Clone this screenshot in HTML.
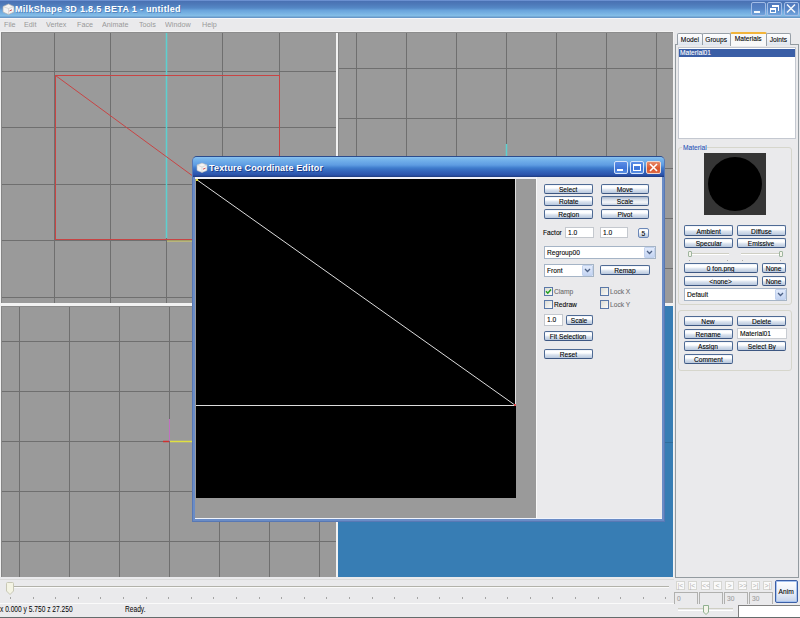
<!DOCTYPE html>
<html><head><meta charset="utf-8"><style>
*{margin:0;padding:0;box-sizing:border-box}
html,body{width:800px;height:618px;overflow:hidden}
body{position:relative;background:#eaeaec;font-family:"Liberation Sans",sans-serif;font-size:8px;color:#000}
.a{position:absolute;white-space:nowrap}
i{font-style:normal;display:inline-block;transform:scaleX(0.83);-webkit-text-stroke:0.1px currentColor}
i.l{transform-origin:0 50%}
.btn{position:absolute;border:1px solid #4e6a94;border-bottom-color:#3d5782;border-radius:2px;background:linear-gradient(#e4ebf5 0px,#ffffff 1px,#fcfdfe 38%,#d9e2ee 60%,#b9c8dd 100%);text-align:center;color:#000;white-space:nowrap;overflow:hidden}
.btn.p{background:linear-gradient(#a9b6ca 0px,#d6dde8 30%,#f4f6f9 65%,#c9d3e2 100%)}
.inp{position:absolute;background:#fff;border:1px solid #b6bcc6;padding-left:2px;white-space:nowrap;overflow:hidden}
</style></head><body>
<div class="a" style="left:0px;top:0px;width:800px;height:18px;background:linear-gradient(#7a9ede 0px,#4a72b4 1.5px,#4d78b8 4px,#5588c6 8px,#6aa4dc 10.5px,#80bae6 15px,#86c0e8 16px,#6898c8 17px,#6898c8 18px)"></div>
<div class="a" style="left:0px;top:18px;width:800px;height:1px;background:#f6f6fa"></div>
<svg class="a" style="left:2px;top:3px" width="13" height="12" viewBox="0 0 13 12">
 <path d="M1 3.5 L6.5 1 L12 3.5 L12 9 L6.5 11.5 L1 9 Z" fill="#f4f4f4" stroke="#b0b0b0" stroke-width="0.7"/>
 <path d="M1 3.5 L6.5 5.5 L12 3.5 M6.5 5.5 L6.5 11.5" fill="none" stroke="#c8c8c8" stroke-width="0.6"/>
 <path d="M7.5 8 L10 6.8" stroke="#d04040" stroke-width="0.9"/>
</svg>
<div class="a" style="left:15px;top:3px;font-size:9px;font-weight:bold;color:#fff;line-height:13px;white-space:nowrap;letter-spacing:0.3px;text-shadow:1px 1px 0 rgba(30,60,120,.35)">MilkShape 3D 1.8.5 BETA 1 - untitled</div>
<div class="a" style="left:751px;top:2px;width:15px;height:14px;border:1px solid #a2bce6;border-radius:2px;background:linear-gradient(#5078bc,#5684c6 50%,#70a4dc)"></div>
<div class="a" style="left:754px;top:11px;width:6px;height:2px;background:#f4f8fc"></div>
<div class="a" style="left:767px;top:2px;width:15px;height:14px;border:1px solid #a2bce6;border-radius:2px;background:linear-gradient(#5078bc,#5684c6 50%,#70a4dc)"></div>
<div class="a" style="left:770px;top:8px;width:6px;height:5px;border:1px solid #fff;border-top-width:2px"></div>
<div class="a" style="left:772px;top:5px;width:7px;height:6px;border-top:2px solid #fff;border-right:1px solid #fff"></div>
<div class="a" style="left:784px;top:2px;width:15px;height:14px;border:1px solid #a2bce6;border-radius:2px;background:linear-gradient(#5078bc,#5684c6 50%,#70a4dc)"></div>
<svg class="a" style="left:785px;top:3px" width="12" height="11"><path d="M2 1.5 L10 9.5 M10 1.5 L2 9.5" stroke="#f4f8fc" stroke-width="1.5"/></svg>
<div class="a" style="left:4px;top:18px;line-height:13px;font-size:8px;color:#999;white-space:nowrap;transform:scaleX(.9);transform-origin:0 0">File</div>
<div class="a" style="left:24px;top:18px;line-height:13px;font-size:8px;color:#999;white-space:nowrap;transform:scaleX(.9);transform-origin:0 0">Edit</div>
<div class="a" style="left:46px;top:18px;line-height:13px;font-size:8px;color:#999;white-space:nowrap;transform:scaleX(.9);transform-origin:0 0">Vertex</div>
<div class="a" style="left:77px;top:18px;line-height:13px;font-size:8px;color:#999;white-space:nowrap;transform:scaleX(.9);transform-origin:0 0">Face</div>
<div class="a" style="left:102px;top:18px;line-height:13px;font-size:8px;color:#999;white-space:nowrap;transform:scaleX(.9);transform-origin:0 0">Animate</div>
<div class="a" style="left:139px;top:18px;line-height:13px;font-size:8px;color:#999;white-space:nowrap;transform:scaleX(.9);transform-origin:0 0">Tools</div>
<div class="a" style="left:165px;top:18px;line-height:13px;font-size:8px;color:#999;white-space:nowrap;transform:scaleX(.9);transform-origin:0 0">Window</div>
<div class="a" style="left:202px;top:18px;line-height:13px;font-size:8px;color:#999;white-space:nowrap;transform:scaleX(.9);transform-origin:0 0">Help</div>
<div class="a" style="left:0px;top:31px;width:674px;height:546px;background:#f2f2f2"></div>
<div class="a" style="left:1px;top:32px;width:672px;height:1px;background:#8c8c8c"></div>
<svg class="a" style="left:1px;top:33px" width="335" height="270">
 <rect width="335" height="270" fill="#9a9a9a"/>
 <g stroke="#6f6f6f" stroke-width="1">
  <path d="M53.5 0V270 M109.5 0V270 M165.5 0V270 M221.5 0V270 M278.5 0V270"/>
  <path d="M0 38.5H335 M0 94.5H335 M0 151.5H335 M0 207.5H335 M0 264.5H335"/>
 </g>
 <path d="M165.5 0V205" stroke="#5cd0d0" stroke-width="1.5"/>
 <rect x="54.5" y="42.5" width="224" height="164" fill="none" stroke="#c84444" stroke-width="1"/>
 <path d="M54.5 42.5 L278.5 206.5" stroke="#c84444" stroke-width="1"/>
 <path d="M166 208H200" stroke="#d8d060" stroke-width="1"/>
</svg>
<svg class="a" style="left:338px;top:33px" width="335" height="270">
 <rect width="335" height="270" fill="#9a9a9a"/>
 <g stroke="#6f6f6f" stroke-width="1">
  <path d="M18.5 0V270 M68.5 0V270 M118.5 0V270 M168.5 0V270 M218.5 0V270 M268.5 0V270 M318.5 0V270"/>
  <path d="M0 35.5H335 M0 85.5H335 M0 135.5H335 M0 185.5H335 M0 235.5H335"/>
 </g>
 <path d="M168.5 111V125" stroke="#5cd0d0" stroke-width="1.5"/>
</svg>
<svg class="a" style="left:1px;top:306px" width="335" height="271">
 <rect width="335" height="271" fill="#9a9a9a"/>
 <g stroke="#6f6f6f" stroke-width="1">
  <path d="M18.5 0V271 M68.5 0V271 M118.5 0V271 M168.5 0V271 M218.5 0V271 M268.5 0V271 M318.5 0V271"/>
  <path d="M0 35.5H335 M0 85.5H335 M0 135.5H335 M0 185.5H335 M0 235.5H335"/>
 </g>
 <path d="M168.5 113V135" stroke="#c070c0" stroke-width="1"/>
 <path d="M162 135.5H168" stroke="#d03030" stroke-width="1.5"/>
 <path d="M169 135.5H195" stroke="#e0e040" stroke-width="1.5"/>
</svg>
<div class="a" style="left:338px;top:306px;width:335px;height:271px;background:#377db4"></div>
<div class="a" style="left:665px;top:442px;width:8px;height:1px;background:#2f6c9c"></div>
<div class="a" style="left:1px;top:33px;width:1px;height:270px;background:#858585"></div>
<div class="a" style="left:338px;top:33px;width:1px;height:270px;background:#868686"></div>
<div class="a" style="left:1px;top:306px;width:1px;height:271px;background:#858585"></div>
<div class="a" style="left:1px;top:306px;width:335px;height:1px;background:#8a8a8a"></div>
<div class="a" style="left:675px;top:44px;width:124px;height:534px;border:1px solid #939ba0;background:#eaeaec"></div>
<div class="a" style="left:677px;top:33px;width:26px;height:12px;border:1px solid #98a0a8;border-bottom:none;border-radius:2px 2px 0 0;background:linear-gradient(#fefefe,#f2f4f8 50%,#dde4ee);text-align:center;line-height:11px"><i>Model</i></div>
<div class="a" style="left:702px;top:33px;width:29px;height:12px;border:1px solid #98a0a8;border-bottom:none;border-radius:2px 2px 0 0;background:linear-gradient(#fefefe,#f2f4f8 50%,#dde4ee);text-align:center;line-height:11px"><i>Groups</i></div>
<div class="a" style="left:766px;top:33px;width:25px;height:12px;border:1px solid #98a0a8;border-bottom:none;border-radius:2px 2px 0 0;background:linear-gradient(#fefefe,#f2f4f8 50%,#dde4ee);text-align:center;line-height:11px"><i>Joints</i></div>
<div class="a" style="left:730px;top:32px;width:37px;height:14px;border:1px solid #98a0a8;border-bottom:none;border-top:2px solid #f2b43a;border-radius:2px 2px 0 0;background:#f8f8f8;text-align:center;line-height:10px"><i>Materials</i></div>
<div class="a" style="left:678px;top:47px;width:118px;height:92px;border:1px solid #c4c8d0;background:#fff"></div>
<div class="a" style="left:679px;top:49px;width:116px;height:8px;background:#3a5ea6;color:#fff;line-height:8px;padding-left:1px"><i class=l>Material01</i></div>
<div class="a" style="left:678px;top:147px;width:114px;height:158px;border:1px solid #d6d6cc;border-radius:3px"></div>
<div class="a" style="left:682px;top:143px;width:25px;height:9px;background:#eaeaec;color:#2a56b8;line-height:9px;padding-left:1px"><i class=l>Material</i></div>
<div class="a" style="left:704px;top:153px;width:62px;height:62px;background:#353535"></div>
<div class="a" style="left:708px;top:157px;width:54px;height:54px;border-radius:50%;background:#000"></div>
<div class="btn" style="left:684px;top:225px;width:49px;height:11px;line-height:9px;padding-top:1px;"><i>Ambient</i></div>
<div class="btn" style="left:737px;top:225px;width:49px;height:11px;line-height:9px;padding-top:1px;"><i>Diffuse</i></div>
<div class="btn" style="left:684px;top:238px;width:49px;height:10px;line-height:8px;padding-top:1px;"><i>Specular</i></div>
<div class="btn" style="left:737px;top:238px;width:49px;height:10px;line-height:8px;padding-top:1px;"><i>Emissive</i></div>
<div class="a" style="left:688px;top:253px;width:41px;height:2px;border-top:1px solid #cfcfc4;border-bottom:1px solid #fff"></div>
<div class="a" style="left:741px;top:253px;width:41px;height:2px;border-top:1px solid #cfcfc4;border-bottom:1px solid #fff"></div>
<div class="a" style="left:688px;top:251px;width:4px;height:6px;border:1px solid #9fb59f;border-radius:1px;background:#f4f4ea"></div>
<div class="a" style="left:779px;top:251px;width:4px;height:6px;border:1px solid #9fb59f;border-radius:1px;background:#f4f4ea"></div>
<div class="a" style="left:689px;top:260px;width:1px;height:1px;background:#aaa"></div>
<div class="a" style="left:727px;top:260px;width:1px;height:1px;background:#aaa"></div>
<div class="a" style="left:742px;top:260px;width:1px;height:1px;background:#aaa"></div>
<div class="a" style="left:780px;top:260px;width:1px;height:1px;background:#aaa"></div>
<div class="btn" style="left:684px;top:263px;width:74px;height:10px;line-height:8px;padding-top:1px;"><i>0 fon.png</i></div>
<div class="btn" style="left:762px;top:263px;width:24px;height:10px;line-height:8px;padding-top:1px;"><i>None</i></div>
<div class="btn" style="left:684px;top:276px;width:74px;height:10px;line-height:8px;padding-top:1px;"><i>&lt;none&gt;</i></div>
<div class="btn" style="left:762px;top:276px;width:24px;height:10px;line-height:8px;padding-top:1px;"><i>None</i></div>
<div class="inp" style="left:684px;top:288px;width:103px;height:13px;line-height:11px;border-color:#a5b4c6"><i class=l>Default</i></div><div class="a" style="left:775px;top:289px;width:11px;height:11px;border:1px solid #c2d2ee;border-radius:1px;background:linear-gradient(#e2ebfb,#c4d4f2)"></div><svg class="a" style="left:777.0px;top:292.0px" width="7" height="5"><path d="M1 1 L3.5 3.5 L6 1" stroke="#4d6185" stroke-width="1.3" fill="none"/></svg>
<div class="a" style="left:678px;top:310px;width:114px;height:61px;border:1px solid #d6d6cc;border-radius:3px"></div>
<div class="btn" style="left:684px;top:316px;width:49px;height:10px;line-height:8px;padding-top:1px;"><i>New</i></div>
<div class="btn" style="left:737px;top:316px;width:49px;height:10px;line-height:8px;padding-top:1px;"><i>Delete</i></div>
<div class="btn" style="left:684px;top:329px;width:49px;height:10px;line-height:8px;padding-top:1px;"><i>Rename</i></div>
<div class="inp" style="left:737px;top:328px;width:50px;height:11px;line-height:9px;border-color:#c8ccd2"><i class=l>Material01</i></div>
<div class="btn" style="left:684px;top:341px;width:49px;height:10px;line-height:8px;padding-top:1px;"><i>Assign</i></div>
<div class="btn" style="left:737px;top:341px;width:49px;height:10px;line-height:8px;padding-top:1px;"><i>Select By</i></div>
<div class="btn" style="left:684px;top:354px;width:49px;height:10px;line-height:8px;padding-top:1px;"><i>Comment</i></div>
<div class="a" style="left:0px;top:579px;width:674px;height:1px;background:#dadada"></div>
<div class="a" style="left:6px;top:586px;width:663px;height:2px;border-top:1px solid #b2b2aa;border-bottom:1px solid #fafafa"></div>
<svg class="a" style="left:5px;top:581px" width="10" height="15"><path d="M1.5 2.5 Q1.5 1.5 2.5 1.5 L7.5 1.5 Q8.5 1.5 8.5 2.5 L8.5 10 L5 13.5 L1.5 10 Z" fill="#f4f4e4" stroke="#c8c8b6" stroke-width="1"/></svg>
<div class="a" style="left:10px;top:597px;width:1px;height:2px;background:#a4a4a4"></div>
<div class="a" style="left:33px;top:597px;width:1px;height:2px;background:#a4a4a4"></div>
<div class="a" style="left:55px;top:597px;width:1px;height:2px;background:#a4a4a4"></div>
<div class="a" style="left:78px;top:597px;width:1px;height:2px;background:#a4a4a4"></div>
<div class="a" style="left:100px;top:597px;width:1px;height:2px;background:#a4a4a4"></div>
<div class="a" style="left:123px;top:597px;width:1px;height:2px;background:#a4a4a4"></div>
<div class="a" style="left:146px;top:597px;width:1px;height:2px;background:#a4a4a4"></div>
<div class="a" style="left:168px;top:597px;width:1px;height:2px;background:#a4a4a4"></div>
<div class="a" style="left:191px;top:597px;width:1px;height:2px;background:#a4a4a4"></div>
<div class="a" style="left:213px;top:597px;width:1px;height:2px;background:#a4a4a4"></div>
<div class="a" style="left:236px;top:597px;width:1px;height:2px;background:#a4a4a4"></div>
<div class="a" style="left:259px;top:597px;width:1px;height:2px;background:#a4a4a4"></div>
<div class="a" style="left:281px;top:597px;width:1px;height:2px;background:#a4a4a4"></div>
<div class="a" style="left:304px;top:597px;width:1px;height:2px;background:#a4a4a4"></div>
<div class="a" style="left:326px;top:597px;width:1px;height:2px;background:#a4a4a4"></div>
<div class="a" style="left:349px;top:597px;width:1px;height:2px;background:#a4a4a4"></div>
<div class="a" style="left:372px;top:597px;width:1px;height:2px;background:#a4a4a4"></div>
<div class="a" style="left:394px;top:597px;width:1px;height:2px;background:#a4a4a4"></div>
<div class="a" style="left:417px;top:597px;width:1px;height:2px;background:#a4a4a4"></div>
<div class="a" style="left:439px;top:597px;width:1px;height:2px;background:#a4a4a4"></div>
<div class="a" style="left:462px;top:597px;width:1px;height:2px;background:#a4a4a4"></div>
<div class="a" style="left:485px;top:597px;width:1px;height:2px;background:#a4a4a4"></div>
<div class="a" style="left:507px;top:597px;width:1px;height:2px;background:#a4a4a4"></div>
<div class="a" style="left:530px;top:597px;width:1px;height:2px;background:#a4a4a4"></div>
<div class="a" style="left:552px;top:597px;width:1px;height:2px;background:#a4a4a4"></div>
<div class="a" style="left:575px;top:597px;width:1px;height:2px;background:#a4a4a4"></div>
<div class="a" style="left:598px;top:597px;width:1px;height:2px;background:#a4a4a4"></div>
<div class="a" style="left:620px;top:597px;width:1px;height:2px;background:#a4a4a4"></div>
<div class="a" style="left:643px;top:597px;width:1px;height:2px;background:#a4a4a4"></div>
<div class="a" style="left:665px;top:597px;width:1px;height:2px;background:#a4a4a4"></div>
<div class="a" style="left:0px;top:603px;width:674px;height:1px;background:#fafafa"></div>
<div class="a" style="left:0px;top:604px;line-height:10px;font-size:8.5px;transform:scaleX(.78);transform-origin:0 0">x 0.000 y 5.750 z 27.250</div>
<div class="a" style="left:125px;top:604px;line-height:10px;font-size:8.5px;transform:scaleX(.78);transform-origin:0 0">Ready.</div>
<div class="a" style="left:676px;top:581px;width:9px;height:9px;border:1px solid #d6d6d2;background:#fafafa;color:#b4b4b4;text-align:center;line-height:7px;font-size:7px">|&lt;</div>
<div class="a" style="left:688px;top:581px;width:9px;height:9px;border:1px solid #d6d6d2;background:#fafafa;color:#b4b4b4;text-align:center;line-height:7px;font-size:7px">|&lt;</div>
<div class="a" style="left:701px;top:581px;width:9px;height:9px;border:1px solid #d6d6d2;background:#fafafa;color:#b4b4b4;text-align:center;line-height:7px;font-size:7px">&lt;&lt;</div>
<div class="a" style="left:713px;top:581px;width:9px;height:9px;border:1px solid #d6d6d2;background:#fafafa;color:#b4b4b4;text-align:center;line-height:7px;font-size:7px">&lt;</div>
<div class="a" style="left:725px;top:581px;width:9px;height:9px;border:1px solid #d6d6d2;background:#fafafa;color:#b4b4b4;text-align:center;line-height:7px;font-size:7px">&gt;</div>
<div class="a" style="left:738px;top:581px;width:9px;height:9px;border:1px solid #d6d6d2;background:#fafafa;color:#b4b4b4;text-align:center;line-height:7px;font-size:7px">&gt;&gt;</div>
<div class="a" style="left:751px;top:581px;width:9px;height:9px;border:1px solid #d6d6d2;background:#fafafa;color:#b4b4b4;text-align:center;line-height:7px;font-size:7px">&gt;|</div>
<div class="a" style="left:763px;top:581px;width:9px;height:9px;border:1px solid #d6d6d2;background:#fafafa;color:#b4b4b4;text-align:center;line-height:7px;font-size:7px">&gt;|</div>
<div class="a" style="left:674px;top:592px;width:24px;height:12px;border:1px solid #b0b0ae;border-bottom:none;color:#a0a0a0;line-height:11px;padding-left:2px"><i class=l>0</i></div>
<div class="a" style="left:699px;top:592px;width:24px;height:12px;border:1px solid #b0b0ae;border-bottom:none;color:#a0a0a0;line-height:11px;padding-left:2px"><i class=l></i></div>
<div class="a" style="left:724px;top:592px;width:24px;height:12px;border:1px solid #b0b0ae;border-bottom:none;color:#a0a0a0;line-height:11px;padding-left:2px"><i class=l>30</i></div>
<div class="a" style="left:749px;top:592px;width:24px;height:12px;border:1px solid #b0b0ae;border-bottom:none;color:#a0a0a0;line-height:11px;padding-left:2px"><i class=l>30</i></div>
<div class="a" style="left:775px;top:580px;width:23px;height:23px;border:1px solid #3b5fa6;border-radius:2px;box-shadow:inset 0 0 0 1px #a8c4f0;background:linear-gradient(#fff,#e6ecf6 60%,#c4d2ea);text-align:center;line-height:21px"><i>Anim</i></div>
<div class="a" style="left:678px;top:608px;width:55px;height:3px;border-top:1px solid #cfcfc4;border-bottom:1px solid #fff"></div>
<svg class="a" style="left:702px;top:604px" width="9" height="12"><path d="M1.5 1.5 L6.5 1.5 L6.5 8 L4 10.5 L1.5 8 Z" fill="#f4f4ea" stroke="#8fb08f" stroke-width="1"/></svg>
<div class="a" style="left:738px;top:605px;width:62px;height:13px;border-top:1px solid #808080;border-left:1px solid #808080;background:#fff"></div>
<div class="a" style="left:0px;top:617px;width:800px;height:1px;background:#646c6c"></div>
<div class="a" style="left:192px;top:156px;width:473px;height:366px;background:#6a8cc6;border-radius:5px 5px 0 0;border:1px solid #5878b4;border-top-color:#2c4c8c"></div>
<div class="a" style="left:193px;top:157px;width:471px;height:20px;border-radius:4px 4px 0 0;background:linear-gradient(#8ac2f0 0px,#78b6ec 2px,#5e9ce2 8px,#3f7ccc 11px,#3466bc 14px,#2b52aa 18px,#203f88 19.5px)"></div>
<svg class="a" style="left:196px;top:162px" width="12" height="11" viewBox="0 0 12 11">
 <path d="M1 3 L6 1 L11 3 L11 8.5 L6 10.5 L1 8.5 Z" fill="#f4f4f4" stroke="#b8b8b8" stroke-width="0.6"/>
 <path d="M1 3 L6 5 L11 3 M6 5 L6 10.5" fill="none" stroke="#cacaca" stroke-width="0.6"/>
 <path d="M7 7.2 L9.5 6.2" stroke="#d04040" stroke-width="0.9"/>
</svg>
<div class="a" style="left:209px;top:162px;font-size:9px;font-weight:bold;color:#fff;line-height:13px;letter-spacing:0.15px;text-shadow:1px 1px 0 #1c3c88">Texture Coordinate Editor</div>
<div class="a" style="left:614px;top:161px;width:14px;height:13px;border:1px solid #d6e4fa;border-radius:2px;background:linear-gradient(#5c8ee6,#3e74d8 60%,#5a90e4)"></div>
<div class="a" style="left:617px;top:169px;width:6px;height:2px;background:#fff"></div>
<div class="a" style="left:630px;top:161px;width:14px;height:13px;border:1px solid #d6e4fa;border-radius:2px;background:linear-gradient(#5c8ee6,#3e74d8 60%,#5a90e4)"></div>
<div class="a" style="left:633px;top:164px;width:8px;height:7px;border:1px solid #fff;border-top-width:2px"></div>
<div class="a" style="left:646px;top:161px;width:15px;height:13px;border:1px solid #eed8d0;border-radius:2px;background:linear-gradient(#e88a6a,#d8542c 60%,#e06a44)"></div>
<svg class="a" style="left:648px;top:162px" width="11" height="11"><path d="M2 2 L9 9 M9 2 L2 9" stroke="#fff" stroke-width="1.6"/></svg>
<div class="a" style="left:195px;top:177px;width:467px;height:342px;background:#9a9a9a"></div>
<div class="a" style="left:195px;top:177px;width:341px;height:2px;background:#f0f0f6"></div>
<div class="a" style="left:536px;top:177px;width:126px;height:342px;background:#eaeaec;border-left:1px solid #f8f8f8"></div>
<div class="a" style="left:195px;top:518px;width:467px;height:1px;background:#f0f4fc"></div>
<div class="a" style="left:196px;top:179px;width:320px;height:319px;background:#000"></div>
<svg class="a" style="left:196px;top:179px" width="320" height="319">
 <path d="M319.5 0V226.5H0 M0.5 0.5 L319.5 226.5" stroke="#dcdcdc" stroke-width="1" fill="none"/>
 <rect x="0" y="0" width="2" height="2" fill="#e0e040"/>
 <rect x="318" y="225" width="2" height="2" fill="#e05050"/>
</svg>
<div class="btn" style="left:544px;top:184px;width:49px;height:10px;line-height:8px;padding-top:1px;"><i>Select</i></div>
<div class="btn" style="left:601px;top:184px;width:48px;height:10px;line-height:8px;padding-top:1px;"><i>Move</i></div>
<div class="btn" style="left:544px;top:196px;width:49px;height:10px;line-height:8px;padding-top:1px;"><i>Rotate</i></div>
<div class="btn p" style="left:601px;top:196px;width:48px;height:10px;line-height:8px;padding-top:1px;"><i>Scale</i></div>
<div class="btn" style="left:544px;top:209px;width:49px;height:10px;line-height:8px;padding-top:1px;"><i>Region</i></div>
<div class="btn" style="left:601px;top:209px;width:48px;height:10px;line-height:8px;padding-top:1px;"><i>Pivot</i></div>
<div class="a" style="left:543px;top:228px;line-height:10px"><i class=l>Factor</i></div>
<div class="inp" style="left:565px;top:227px;width:29px;height:11px;line-height:9px;border-color:#c4c8ce"><i class=l>1.0</i></div>
<div class="inp" style="left:600px;top:227px;width:28px;height:11px;line-height:9px;border-color:#c4c8ce"><i class=l>1.0</i></div>
<div class="btn" style="left:638px;top:228px;width:11px;height:10px;line-height:8px;padding-top:1px;border-color:#6c88b8"><i>5</i></div>
<div class="inp" style="left:544px;top:246px;width:112px;height:13px;line-height:11px;border-color:#a5b4c6"><i class=l>Regroup00</i></div><div class="a" style="left:644px;top:247px;width:11px;height:11px;border:1px solid #c2d2ee;border-radius:1px;background:linear-gradient(#e2ebfb,#c4d4f2)"></div><svg class="a" style="left:646.0px;top:250.0px" width="7" height="5"><path d="M1 1 L3.5 3.5 L6 1" stroke="#4d6185" stroke-width="1.3" fill="none"/></svg>
<div class="inp" style="left:544px;top:264px;width:50px;height:13px;line-height:11px;border-color:#a5b4c6"><i class=l>Front</i></div><div class="a" style="left:582px;top:265px;width:11px;height:11px;border:1px solid #c2d2ee;border-radius:1px;background:linear-gradient(#e2ebfb,#c4d4f2)"></div><svg class="a" style="left:584.0px;top:268.0px" width="7" height="5"><path d="M1 1 L3.5 3.5 L6 1" stroke="#4d6185" stroke-width="1.3" fill="none"/></svg>
<div class="btn" style="left:600px;top:265px;width:50px;height:10px;line-height:8px;padding-top:1px;"><i>Remap</i></div>
<div class="a" style="left:544px;top:287px;width:9px;height:9px;border:1px solid #5a78a8;background:linear-gradient(135deg,#dcdcd4,#fbfbf9)"></div><svg class="a" style="left:545px;top:288px" width="7" height="7"><path d="M1 3.2 L2.8 5.2 L6 1.5" stroke="#21a121" stroke-width="1.5" fill="none"/></svg><div class="a txt" style="left:554px;top:287px;line-height:10px;color:#6c6c6c"><i class=l>Clamp</i></div>
<div class="a" style="left:600px;top:287px;width:9px;height:9px;border:1px solid #5a78a8;background:linear-gradient(135deg,#dcdcd4,#fbfbf9)"></div><div class="a txt" style="left:610px;top:287px;line-height:10px;color:#6c6c6c"><i class=l>Lock X</i></div>
<div class="a" style="left:544px;top:300px;width:9px;height:9px;border:1px solid #5a78a8;background:linear-gradient(135deg,#dcdcd4,#fbfbf9)"></div><div class="a txt" style="left:554px;top:300px;line-height:10px;"><i class=l>Redraw</i></div>
<div class="a" style="left:600px;top:300px;width:9px;height:9px;border:1px solid #5a78a8;background:linear-gradient(135deg,#dcdcd4,#fbfbf9)"></div><div class="a txt" style="left:610px;top:300px;line-height:10px;color:#6c6c6c"><i class=l>Lock Y</i></div>
<div class="inp" style="left:544px;top:314px;width:19px;height:12px;line-height:10px;border-color:#c4c8ce"><i class=l>1.0</i></div>
<div class="btn" style="left:566px;top:315px;width:27px;height:10px;line-height:8px;padding-top:1px;"><i>Scale</i></div>
<div class="btn" style="left:544px;top:331px;width:49px;height:10px;line-height:8px;padding-top:1px;"><i>Fit Selection</i></div>
<div class="btn" style="left:544px;top:349px;width:49px;height:10px;line-height:8px;padding-top:1px;"><i>Reset</i></div>
</body></html>
